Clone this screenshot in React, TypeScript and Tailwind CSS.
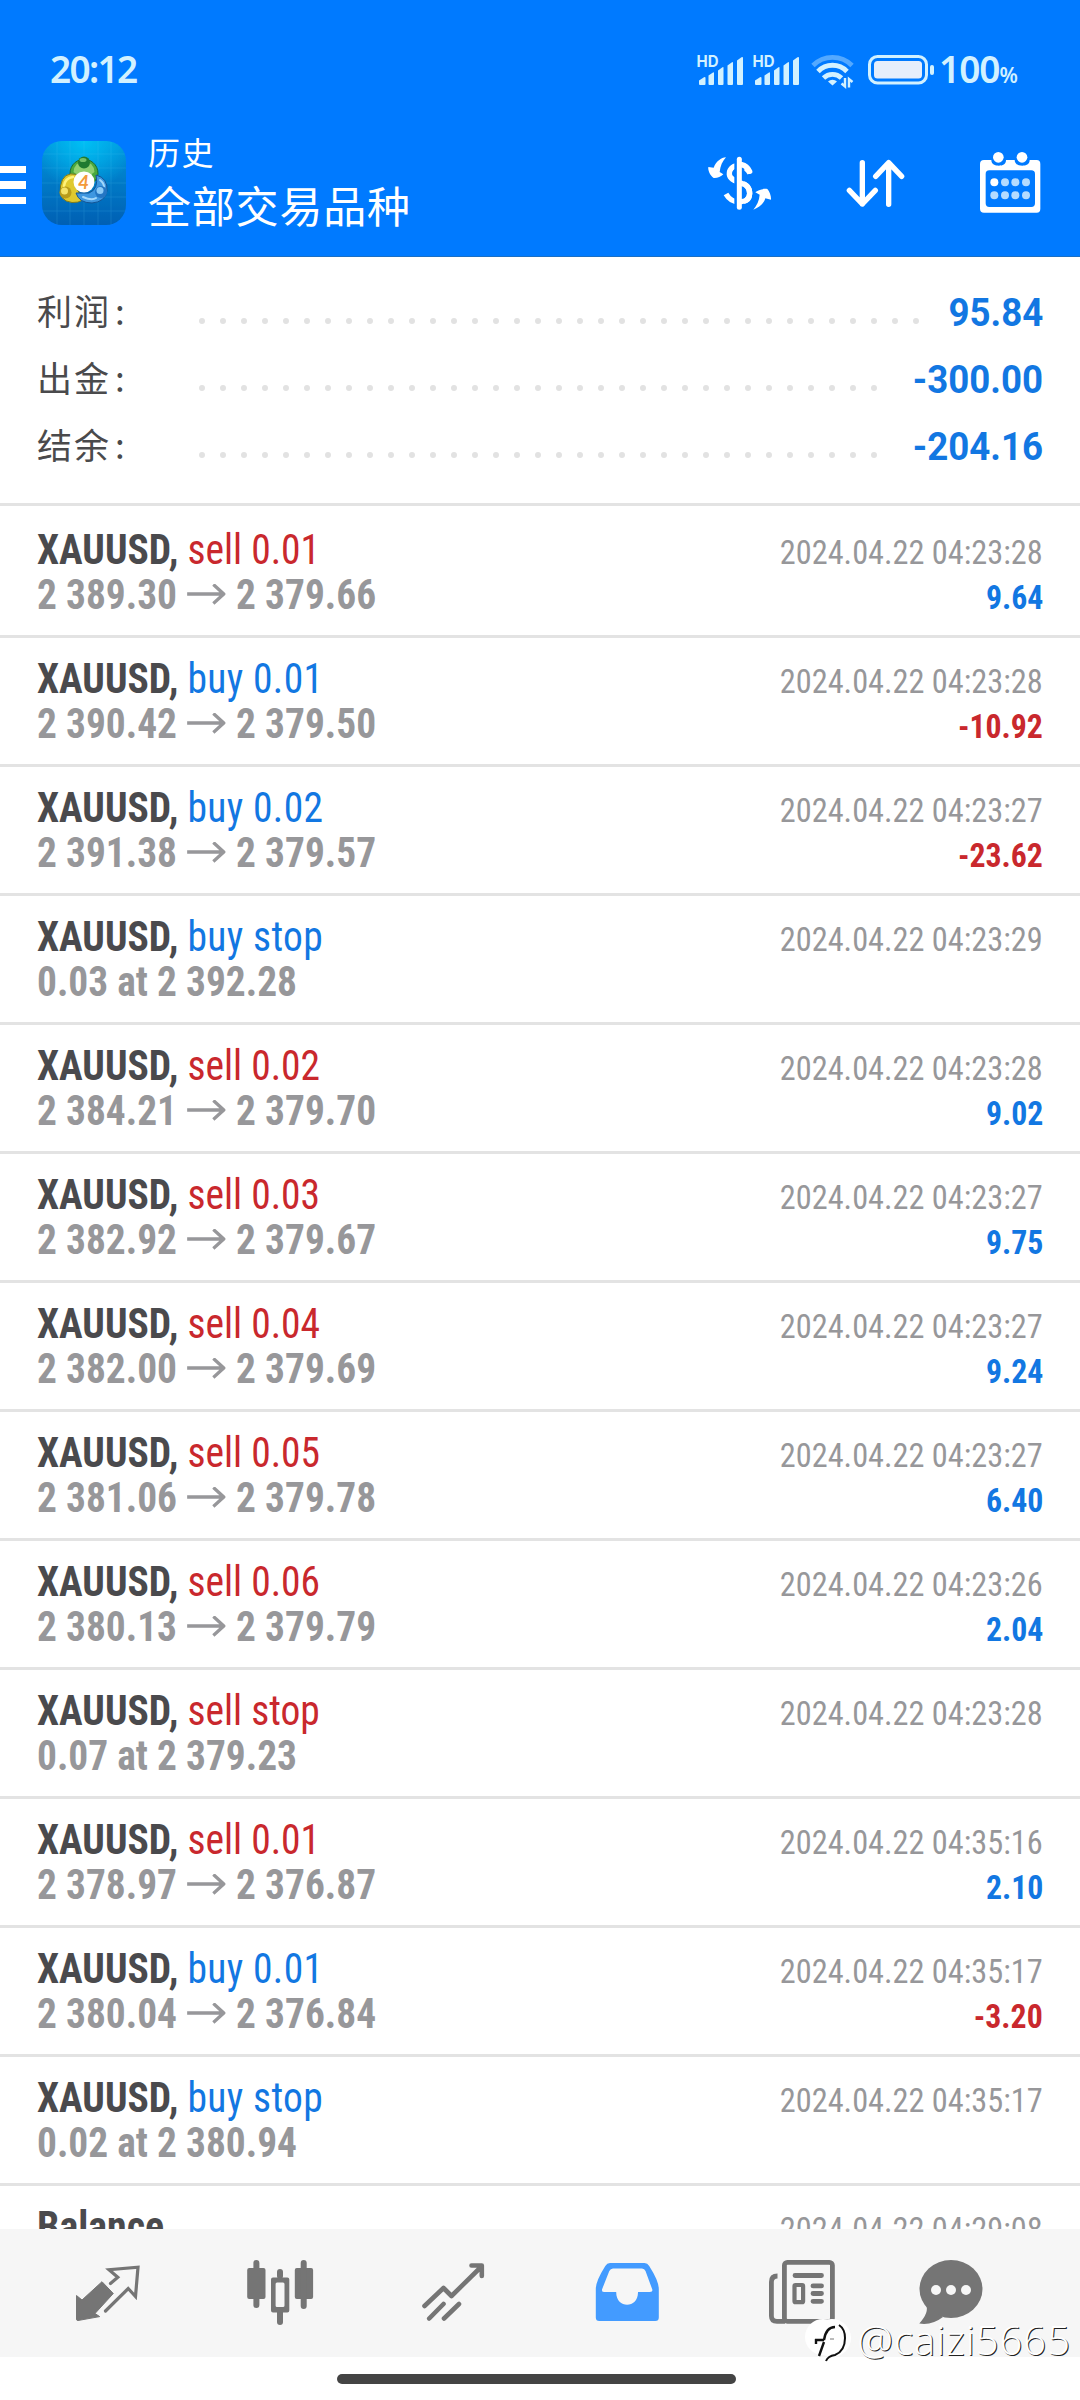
type Side = "sell" | "buy";

interface Deal {
  side: Side;
  label: string;
  open: string;
  close?: string;
  time: string;
  profit?: string;
}

const summary = [
  { label: "利润", value: "95.84" },
  { label: "出金", value: "-300.00" },
  { label: "结余", value: "-204.16" },
];

const deals: Deal[] = [
  { side: "sell", label: "sell 0.01", open: "2 389.30", close: "2 379.66", time: "2024.04.22 04:23:28", profit: "9.64" },
  { side: "buy", label: "buy 0.01", open: "2 390.42", close: "2 379.50", time: "2024.04.22 04:23:28", profit: "-10.92" },
  { side: "buy", label: "buy 0.02", open: "2 391.38", close: "2 379.57", time: "2024.04.22 04:23:27", profit: "-23.62" },
  { side: "buy", label: "buy stop", open: "0.03 at 2 392.28", time: "2024.04.22 04:23:29" },
  { side: "sell", label: "sell 0.02", open: "2 384.21", close: "2 379.70", time: "2024.04.22 04:23:28", profit: "9.02" },
  { side: "sell", label: "sell 0.03", open: "2 382.92", close: "2 379.67", time: "2024.04.22 04:23:27", profit: "9.75" },
  { side: "sell", label: "sell 0.04", open: "2 382.00", close: "2 379.69", time: "2024.04.22 04:23:27", profit: "9.24" },
  { side: "sell", label: "sell 0.05", open: "2 381.06", close: "2 379.78", time: "2024.04.22 04:23:27", profit: "6.40" },
  { side: "sell", label: "sell 0.06", open: "2 380.13", close: "2 379.79", time: "2024.04.22 04:23:26", profit: "2.04" },
  { side: "sell", label: "sell stop", open: "0.07 at 2 379.23", time: "2024.04.22 04:23:28" },
  { side: "sell", label: "sell 0.01", open: "2 378.97", close: "2 376.87", time: "2024.04.22 04:35:16", profit: "2.10" },
  { side: "buy", label: "buy 0.01", open: "2 380.04", close: "2 376.84", time: "2024.04.22 04:35:17", profit: "-3.20" },
  { side: "buy", label: "buy stop", open: "0.02 at 2 380.94", time: "2024.04.22 04:35:17" },
];

function Signal() {
  return (
    <svg className="overflow-visible" width="48" height="34" viewBox="0 0 48 34" fill="currentColor">
      <text x="0.5" y="12.5" fontSize="15.5" fontWeight="700" fontFamily="Inter, sans-serif" textLength="22" lengthAdjust="spacingAndGlyphs">HD</text>
      <path d="M3 30v-3.500l5-3.300q1.500-.6 1.500.8V30q0 1-1 1H4q-1 0-1-1z" />
      <path d="M12.500 30v-8.500l4.500-3q1-.5 1 .6V30q0 1-1 1h-3.500q-1 0-1-1z" />
      <path d="M22 30V16.500l4.500-3.300q1-.6 1 .6V30q0 1-1 1H23q-1 0-1-1z" />
      <path d="M31.500 30V11.500l4.500-3.300q1-.6 1 .6V30q0 1-1 1h-3.500q-1 0-1-1z" />
      <path d="M41 30V6.500l4.500-3.300q1.500-.6 1.500.8V30q0 1-1 1h-4q-1 0-1-1z" />
    </svg>
  );
}

function Wifi() {
  return (
    <svg width="44" height="36" viewBox="0 0 44 36" fill="none" stroke="currentColor" strokeWidth="4.800">
      <path d="M2 11.500a27.500 27.500 0 0 1 39 0" opacity="0.4" />
      <path d="M7 17.500a20 20 0 0 1 29 0" />
      <path d="M12.500 24a13 13 0 0 1 18 0" />
      <path d="M21.500 31.500l-4.500-4a6.500 6.500 0 0 1 9 0z" fill="currentColor" stroke="none" />
      <path d="M34 24v8.500l-3.500-3M38 33.500v-8.500l3.500 3" strokeWidth="2.400" />
    </svg>
  );
}

function Battery() {
  return (
    <svg width="67" height="30" viewBox="0 0 67 30" fill="none">
      <rect x="1.500" y="1.500" width="57" height="26.500" rx="8" stroke="currentColor" strokeWidth="3" />
      <rect x="6" y="6" width="48" height="17.500" rx="3.500" fill="#e6eefb" />
      <rect x="62" y="10" width="4" height="10" rx="2" fill="currentColor" />
    </svg>
  );
}

function AppLogo() {
  return (
    <svg width="84" height="84" viewBox="0 0 84 84" className="rounded-[20px]">
      <defs>
        <linearGradient id="bg" x1="0" y1="0" x2="0" y2="1">
          <stop offset="0" stopColor="#0096dc" />
          <stop offset="0.5" stopColor="#007ac6" />
          <stop offset="1" stopColor="#0060b4" />
        </linearGradient>
        <radialGradient id="glow" cx="0.5" cy="0" r="0.6">
          <stop offset="0" stopColor="#00c0f4" />
          <stop offset="1" stopColor="#00c0f4" stopOpacity="0" />
        </radialGradient>
      </defs>
      <rect width="84" height="84" fill="url(#bg)" />
      <rect width="84" height="84" fill="url(#glow)" />
      <path d="M15 0v84M28 0v84M42 0v84M56 0v84M69 0v84M0 13h84M0 27h84M0 42h84M0 56h84M0 70h84" stroke="#5fc8f5" strokeWidth="0.700" opacity="0.220" />
      {/* green, yellow and blue figures round the badge */}
      <path d="M28.500 36a14 14 0 1 1 27 0l-4 6h-19z" fill="#4aa83e" stroke="#1d6b2c" />
      <path d="M31.500 31a10.500 10.500 0 0 1 21 0l-4 3h-13z" fill="#8fcf70" />
      <path d="M35 33.500Q21 30 18.500 45Q16 60 30 61.500Q36 62 41 59L34 46Z" fill="#dfc92f" stroke="#7d7a1d" />
      <path d="M22 45Q23 37 31 36" stroke="#fff27a" strokeWidth="2.500" fill="none" strokeLinecap="round" />
      <path d="M34 52Q37 62 50 62Q63 61 65 50Q66 37 54 34Q57 48 47 52Z" fill="#3f97e0" stroke="#135494" />
      <path d="M41 56Q50 60 54 57M58 39Q62 42 62 46" stroke="#a4d8fb" strokeWidth="2" fill="none" strokeLinecap="round" />
      <circle cx="42" cy="21.500" r="6" fill="#207a30" />
      <ellipse cx="41" cy="19" rx="3.500" ry="2" fill="#75bf68" />
      <circle cx="23.500" cy="51.500" r="6" fill="#b89c1c" />
      <circle cx="22.500" cy="50" r="3.500" fill="#f4e36a" />
      <circle cx="59" cy="51" r="6" fill="#2476c4" />
      <circle cx="58" cy="49.500" r="3.500" fill="#8ccbf7" />
      <circle cx="42" cy="41" r="10.500" fill="#fff" />
      <text x="41.500" y="48" textAnchor="middle" fontSize="19" fontStyle="italic" fontWeight="700" fontFamily="Lato, sans-serif" fill="#f39a3a">4</text>
    </svg>
  );
}

function CurrencyIcon() {
  return (
    <svg width="65" height="64" viewBox="0 0 195 192" fill="none" stroke="#fff">
      <path d="M129 70C121 54 104 46 92 47C75 48 66 60 67 73C69 88 84 92 97 97C114 102 128 108 128 131C127 148 113 157 97 156C78 156 65 146 57 132" strokeWidth="16" />
      <path d="M97 15v170" stroke="#007aff" strokeWidth="30" />
      <path d="M104 44q16 4 24 20M104 100q24 6 24 30t-24 25" strokeWidth="16" strokeLinecap="round" />
      <path d="M97 28v144" strokeWidth="15" strokeLinecap="round" />
      <path d="M57 22C42 23 28 34 20 53L4 51C2 60 10 78 20 84C29 85 42 81 49 73L38 66C40 48 46 34 57 22Z" fill="#fff" stroke="none" />
      <path d="M139 179C154 172 170 163 175 145L192 149C193 139 188 125 181 117C169 115 152 120 145 127L158 134C157 151 149 167 139 179Z" fill="#fff" stroke="none" />
    </svg>
  );
}

function SortIcon() {
  return (
    <svg width="61" height="64" viewBox="0 0 183 192" fill="none" stroke="#fff" strokeWidth="16" strokeLinecap="round" strokeLinejoin="round">
      <path d="M52 38v124M13 121l39 41l39-41" />
      <path d="M131 163V38M92 79l39-41l39 41" />
    </svg>
  );
}

function CalendarIcon() {
  return (
    <svg width="61" height="64" viewBox="0 0 183 192" fill="#fff">
      <path fillRule="evenodd" d="M12 30H34C34 43 46 47 56 47C68 47 78 43 78 30H104C104 43 116 47 127 47C138 47 149 43 149 30H170Q181 30 181 42V176Q181 188 170 188H12Q0 188 0 176V42Q0 30 12 30ZM28 61Q17 61 17 72V160Q17 171 28 171H154Q165 171 165 160V72Q165 61 154 61Z" />
      <circle cx="55" cy="22" r="16" />
      <circle cx="126" cy="22" r="16" />
      <circle cx="43" cy="97" r="12" />
      <g fill="#b4dbff">
        <circle cx="75" cy="97" r="12" />
        <circle cx="106" cy="97" r="12" />
        <circle cx="138" cy="97" r="12" />
        <circle cx="43" cy="136" r="12" />
        <circle cx="75" cy="136" r="12" />
        <circle cx="106" cy="136" r="12" />
        <circle cx="138" cy="136" r="12" />
      </g>
    </svg>
  );
}

function StatusBar() {
  return (
    <div className="flex h-[141px] items-start pl-[50px] pt-[46px] text-[#d2f1ff]">
      <span className="w-[646px] font-['Noto_Sans'] text-[37px] font-semibold leading-[46px] tracking-[-1.700px]">20:12</span>
      <div className="flex items-start pt-2">
        <Signal />
        <div className="ml-2">
          <Signal />
        </div>
        <div className="ml-[11px]">
          <Wifi />
        </div>
        <div className="ml-[13px] pt-px">
          <Battery />
        </div>
      </div>
      <div className="ml-1 flex items-baseline font-['Noto_Sans'] font-semibold leading-[46px]">
        <span className="text-[37px] tracking-[-1px]">100</span>
        <span className="text-[21px]">%</span>
      </div>
    </div>
  );
}

function Header() {
  return (
    <header className="h-[257px] shrink-0 border-b border-[#1a6fc4] bg-[#007aff]">
      <StatusBar />
      <div className="flex items-start">
        <div className="flex w-[26px] flex-col gap-2 pt-[25px]">
          <span className="h-[7px] bg-white" />
          <span className="h-2 bg-white" />
          <span className="h-[7px] bg-white" />
        </div>
        <div className="ml-4">
          <AppLogo />
        </div>
        <div className="ml-[22px] w-[559px] font-['Noto_Sans_CJK_SC',sans-serif] text-white">
          <h2 className="-mt-[13px] text-[32px] leading-[46px] tracking-[1.500px]">历史</h2>
          <h1 className="mt-0.5 text-[43px] leading-[56px] tracking-[0.800px]">全部交易品种</h1>
        </div>
        <div className="flex pt-[9px]">
          <CurrencyIcon />
          <div className="ml-[73px]">
            <SortIcon />
          </div>
          <div className="ml-[74px]">
            <CalendarIcon />
          </div>
        </div>
      </div>
    </header>
  );
}

function Summary() {
  return (
    <section className="h-[249px] shrink-0 border-b-[3px] border-[#e3e3e3] pt-[19px]">
      {summary.map((item) => (
        <div key={item.label} className="flex h-[67px] items-center pl-[37px] pr-[37px]">
          <div className="flex w-[162px] font-['Noto_Sans_CJK_SC',sans-serif] text-[35px] leading-[67px] tracking-[2px] text-[#4a4a4c]">
            {item.label}
            <span className="ml-1">:</span>
          </div>
          <svg className="mt-[22px] h-2 min-w-0" width={item.value.length > 5 ? 680 : 722} height="8">
            <line x1="3" y1="4" x2={item.value.length > 5 ? 676 : 718} y2="4" stroke="#e2e2e2" strokeWidth="6" strokeLinecap="round" strokeDasharray="0 21" />
          </svg>
          <span className="ml-auto mt-[7px] origin-right scale-x-[0.965] font-['Roboto'] text-[38px] font-bold leading-[58px] text-[#1277e2]">{item.value}</span>
        </div>
      ))}
    </section>
  );
}

function DealArrow() {
  return (
    <svg className="ml-[11px] mr-[11px]" width="41" height="22" viewBox="0 0 41 22" fill="none" stroke="#97979a" strokeWidth="3.500">
      <path d="M0 10h39M28 0.500l11 9.500l-11 9.500" />
    </svg>
  );
}

function DealRow({ deal }: { deal: Deal }) {
  const sideColor = deal.side === "sell" ? "text-[#c9282d]" : "tracking-[0.400px] text-[#1277e2]";
  const profitColor = deal.profit?.startsWith("-") ? "text-[#c9282d]" : "text-[#1277e2]";

  return (
    <li className="h-[129px] shrink-0 border-b-[3px] border-[#e3e3e3] pl-[37px] pr-[37px] pt-[18px]">
      <div className="flex h-[45px] items-baseline justify-between">
        <p className="origin-left scale-x-[0.94] text-[42px] leading-[45px]">
          <span className="font-bold text-[#4a4a4d]">XAUUSD, </span>
          <span className={sideColor}>{deal.label}</span>
        </p>
        <time className="origin-right scale-x-[0.95] text-[34px] leading-[45px] text-[#97979a]">{deal.time}</time>
      </div>
      <div className="flex h-[45px] items-baseline justify-between">
        <p className="flex origin-left scale-x-[0.938] items-center text-[42px] font-bold leading-[45px] text-[#97979a]">
          {deal.open}
          {deal.close && (
            <>
              <DealArrow />
              {deal.close}
            </>
          )}
        </p>
        {deal.profit && (
          <span className={`origin-right scale-x-[0.935] text-[34px] font-bold leading-[45px] ${profitColor}`}>{deal.profit}</span>
        )}
      </div>
    </li>
  );
}

function BottomNav() {
  return (
    <nav className="flex h-32 shrink-0 items-center gap-[103px] bg-[#f6f6f6] pl-[73px] text-[#757575]">
      {/* quotes */}
      <svg width="70" height="70" viewBox="73 88 70 70" fill="currentColor">
        <path d="M76.500 125.500L82 130L102 111.700L113.300 123.500L95 143.500L99.700 146.600L78 150.500Q76.500 150.500 76.500 149Z" stroke="currentColor" strokeLinejoin="round" />
        <path d="M110.500 113.500L117.800 107.300L109 99.700L138 97.200L135.500 126.500L128.200 118.500L105.500 141" fill="none" stroke="currentColor" strokeWidth="3.200" strokeLinecap="round" />
      </svg>
      {/* charts */}
      <svg width="70" height="70" viewBox="246 88 70 70" fill="currentColor">
        <rect x="247.200" y="98" width="18.300" height="31" rx="2" />
        <rect x="253.400" y="90" width="6" height="48" rx="3" />
        <rect x="294.800" y="98" width="18.300" height="31" rx="2" />
        <rect x="300.700" y="90" width="6" height="49" rx="3" />
        <rect x="277" y="99" width="6" height="10" rx="3" />
        <rect x="277" y="138" width="6" height="17" rx="3" />
        <path fillRule="evenodd" d="M273 107.500H287.300Q289.300 107.500 289.300 109.500V140.500Q289.300 142.500 287.300 142.500H273Q271 142.500 271 140.500V109.500Q271 107.500 273 107.500ZM277 112.500Q275.600 112.500 275.600 114V135.500Q275.600 137 277 137H283Q284.500 137 284.500 135.500V114Q284.500 112.500 283 112.500Z" />
      </svg>
      {/* trade */}
      <svg width="70" height="70" viewBox="419 88 70 70" fill="none" stroke="currentColor" strokeWidth="4.600" strokeLinecap="round" strokeLinejoin="round">
        <path d="M424.500 136L443.500 118L451.500 126L481 97M471.500 95.500H481.800V106M429.200 148.500L443.500 134M444 148.500L459 134" />
      </svg>
      {/* history, the current tab */}
      <svg width="70" height="70" viewBox="592 88 70 70" fill="#439bff">
        <path fillRule="evenodd" d="M610 93H644.500Q647.500 93 649.200 96Q658.800 111 658.800 119V147.500Q658.800 151 655.300 151H599.300Q595.800 151 595.800 147.500V119Q595.800 111 605.300 96Q607 93 610 93ZM613 98.500Q610.500 98.500 609.300 101L602 119.500Q601.500 122 604.500 122H616.200C616 139 638.200 139 638 122H650Q653 122 652.300 119.500L645.500 101Q644.500 98.500 642 98.500Z" />
      </svg>
      {/* news */}
      <svg width="70" height="70" viewBox="765 88 70 70" fill="none" stroke="currentColor" strokeWidth="4.800" strokeLinecap="round">
        <rect x="784.400" y="92.300" width="48" height="59" rx="3" />
        <path d="M777.500 106Q771.400 106 771.400 112V146Q771.400 151.300 777 151.300H785" strokeLinecap="butt" />
        <path d="M795 105.500H821.500M813 115.800H821.500M813 123.500H821.500M813 131.300H821.500" />
        <rect x="794.500" y="115" width="8.600" height="17.200" rx="1" strokeWidth="4.200" />
      </svg>
      {/* messages */}
      <svg className="-ml-6" width="70" height="70" viewBox="914 88 70 70" fill="currentColor">
        <ellipse cx="951" cy="119" rx="31.500" ry="29" />
        <path d="M926 135Q929.500 142 919.300 153.500Q932 155.500 943 147Z" />
        <g fill="#f6f6f6">
          <circle cx="936" cy="120" r="5" />
          <circle cx="951" cy="120" r="5" />
          <circle cx="966" cy="120" r="5" />
        </g>
      </svg>
    </nav>
  );
}

function Watermark() {
  return (
    <div className="absolute bottom-[37px] right-[9px] flex items-center">
      <svg width="54" height="46" viewBox="-6 0 54 46" fill="none">
        <circle cx="13" cy="20" r="18" fill="#fff" />
        <circle cx="22" cy="21" r="19" fill="#fff" />
        <path d="M9 39L14 25M5 23H14M6 27V22M14 23Q16 10 25 10" stroke="#111" strokeWidth="2.400" />
        <path d="M29 8Q35 12 35 21Q35 34 25 38Q18 39 16 44" stroke="#111" strokeWidth="2" />
        <path d="M20 22H24" stroke="#777" strokeWidth="1" />
      </svg>
      <span className="font-['Open_Sans'] text-[40px] font-light leading-[46px] tracking-[1px] text-white [text-shadow:1px_1px_0_#222]">@caizi5665</span>
    </div>
  );
}

export default function App() {
  return (
    <div className="relative flex h-[2400px] w-[1080px] flex-col overflow-hidden bg-white">
      <Header />
      <Summary />
      <main className="h-[1723px] shrink-0 overflow-hidden pt-[3px] font-['Roboto_Condensed']">
        <ul className="flex flex-col">
          {deals.map((deal, i) => (
            <DealRow key={i} deal={deal} />
          ))}
          <li className="flex h-[129px] shrink-0 items-baseline justify-between pl-[37px] pr-[37px] pt-[18px]">
            <span className="origin-left scale-x-[0.95] text-[42px] font-bold leading-[45px] text-[#4a4a4d]">Balance</span>
            <time className="origin-right scale-x-[0.95] text-[34px] leading-[45px] text-[#97979a]">2024.04.22 04:29:08</time>
          </li>
        </ul>
      </main>
      <BottomNav />
      <div className="flex h-[43px] pl-[337px] pt-[17px]">
        <div className="h-2.5 w-[399px] rounded-full bg-[#444]" />
      </div>
      <Watermark />
    </div>
  );
}
